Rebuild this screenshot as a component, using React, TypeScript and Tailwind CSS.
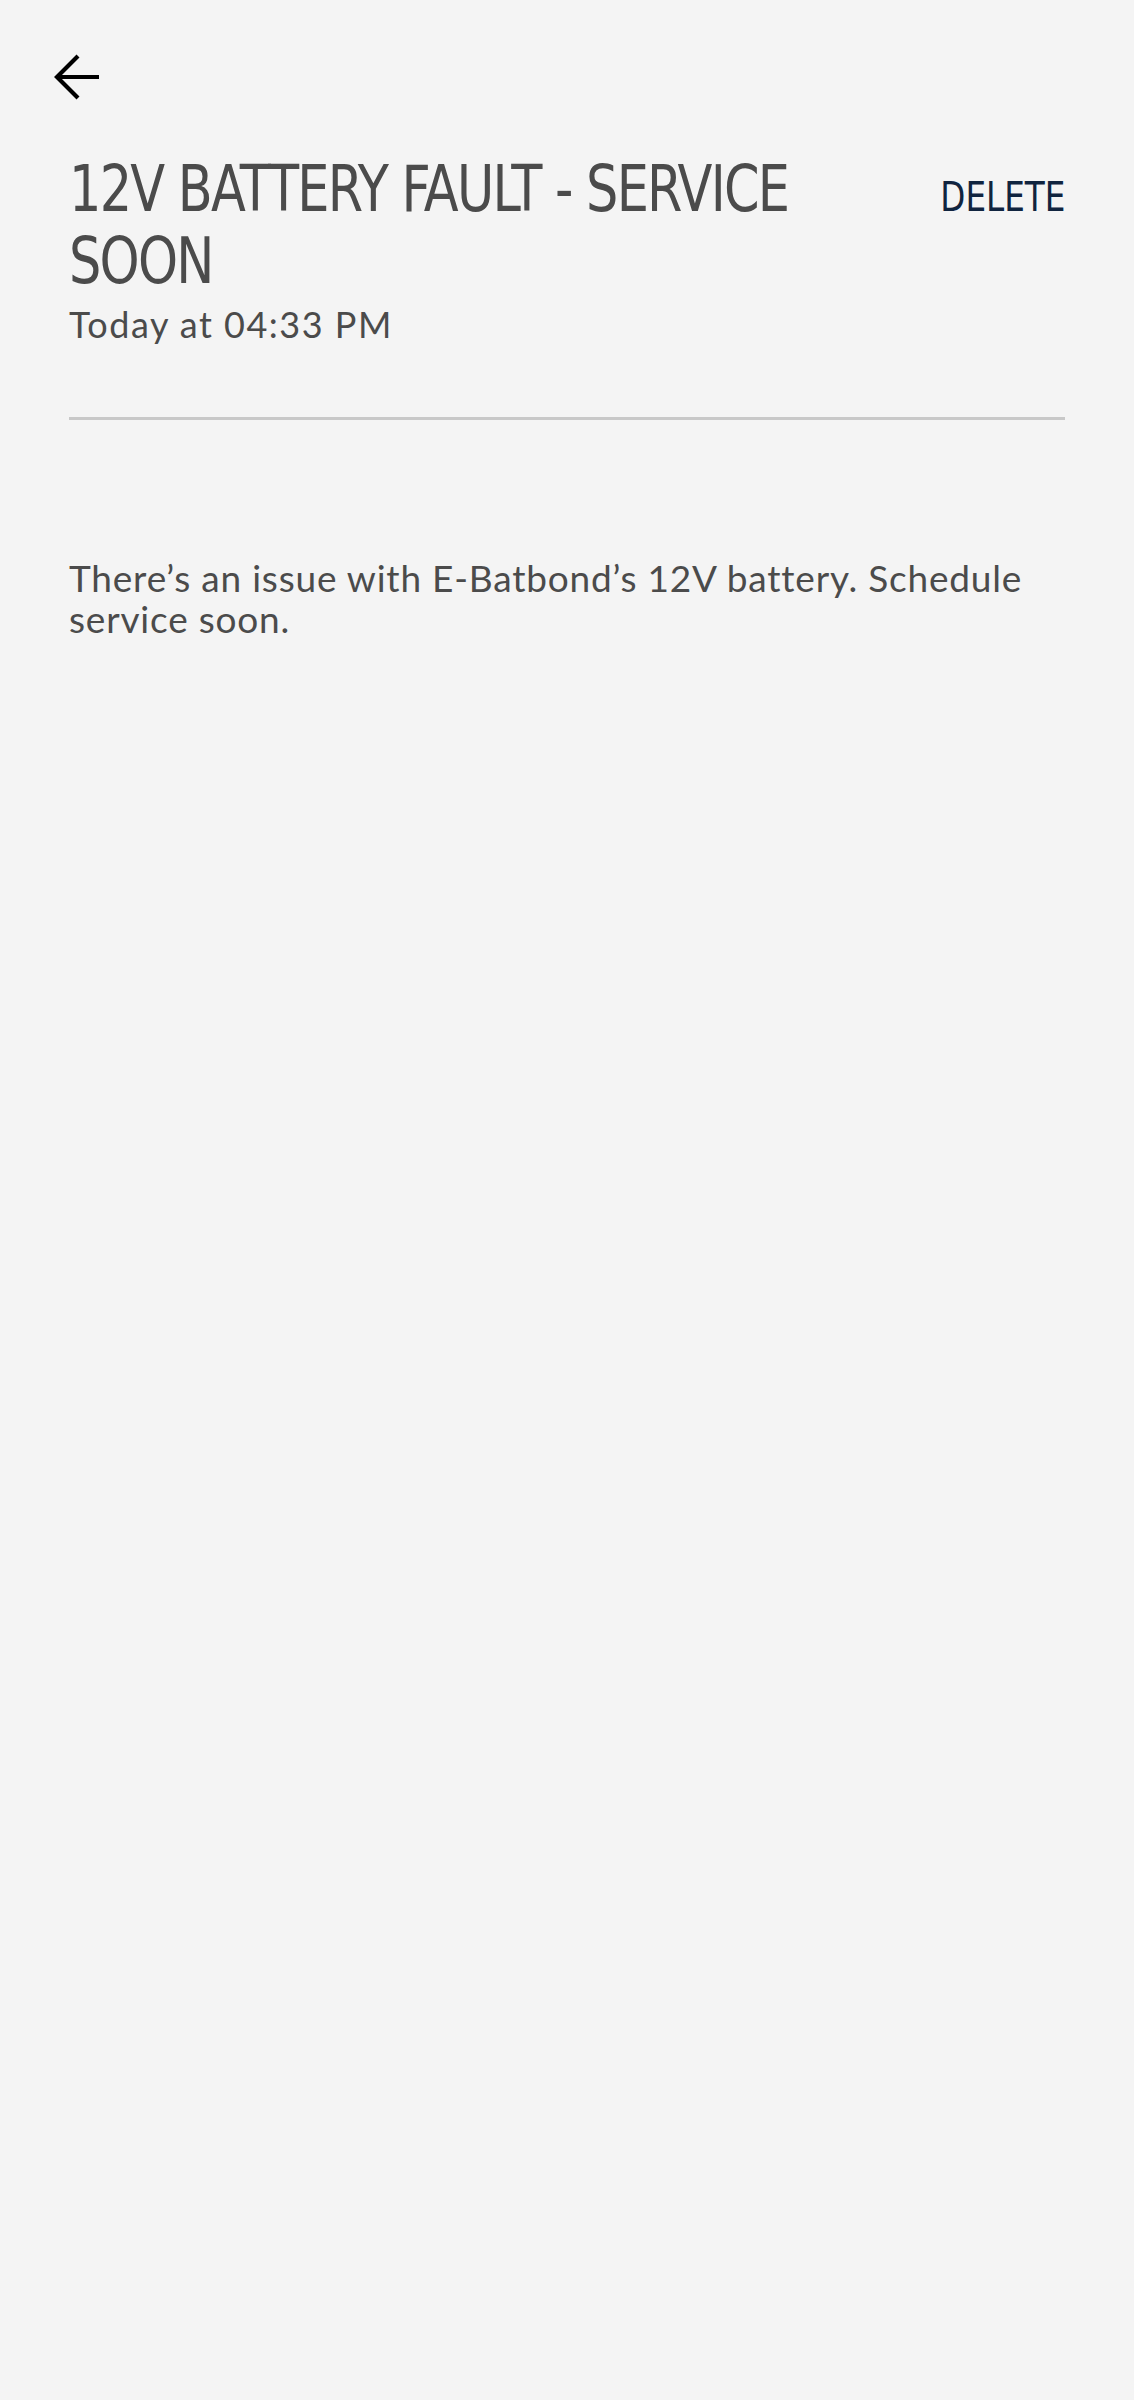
export default function App() {
  return (
    <div className="min-h-[2400px] w-full bg-[#f4f4f4]">
      {/* top bar */}
      <div className="h-[110px] pl-[45px] pt-[45px]">
        <svg width="64" height="64" viewBox="0 0 64 64" fill="none" stroke="#000" strokeWidth="4.2">
          <path d="M54 32H12" />
          <path d="M33 11L12 32l21 21" strokeLinejoin="miter" />
        </svg>
      </div>

      <div className="px-[69px]">
        <div className="mt-[43px] flex items-baseline">
          <h1 className="w-[845px] shrink-0 origin-left scale-x-[0.885] font-['DejaVu_Sans_Condensed','DejaVu_Sans',sans-serif] text-[64px] leading-[72px] tracking-[-2px] font-normal text-[#4b4b4b] [font-stretch:condensed]">
            12V BATTERY FAULT - SERVICE SOON
          </h1>
          <button className="ml-auto shrink-0 origin-right scale-x-[0.885] font-['DejaVu_Sans_Condensed','DejaVu_Sans',sans-serif] text-[41px] leading-[72px] text-[#10243f] [font-stretch:condensed]">
            DELETE
          </button>
        </div>

        <p className="mt-[7px] font-['Lato',sans-serif] text-[36px] leading-[40px] tracking-[1.5px] text-[#4b4b4b]">
          Today at 04:33 PM
        </p>

        <div className="mt-[73px] h-[3px] bg-[#c8c8c8]" />

        <p className="mt-[137px] font-['Lato',sans-serif] text-[37px] leading-[41px] tracking-[0.8px] text-[#4b4b4b]">
          There’s an issue with E-Batbond’s 12V battery. Schedule service soon.
        </p>
      </div>
    </div>
  );
}
